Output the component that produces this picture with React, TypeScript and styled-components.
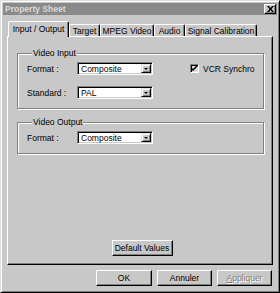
import styled, { createGlobalStyle } from 'styled-components'

const GlobalStyle = createGlobalStyle`
  html, body {
    margin: 0;
    padding: 0;
    background: #c8c8c8;
  }
  body {
    font-family: "Liberation Sans", Arial, sans-serif;
    font-size: 8.5px;
    color: #000;
  }
`

const Dialog = styled.div`
  box-sizing: border-box;
  width: 280px;
  height: 293px;
  background: #c8c8c8;
  border: 1px solid;
  border-color: #dfdfdf #000 #000 #dfdfdf;
  box-shadow: inset 1px 1px #fff, inset -1px -1px #808080;
  padding: 2px 2px 2px 2px;
  display: flex;
  flex-direction: column;
`

const TitleBar = styled.div`
  height: 12px;
  background: #8a8a8a;
  display: flex;
  align-items: center;
  justify-content: space-between;
  padding: 0 1px 0 2px;
`

const Title = styled.span`
  color: #dadada;
  font-weight: bold;
  font-size: 8.5px;
  line-height: 12px;
`

const CloseButton = styled.div`
  box-sizing: border-box;
  width: 12px;
  height: 10px;
  background: #c8c8c8;
  border: 1px solid;
  border-color: #fff #000 #000 #fff;
  box-shadow: inset -1px -1px #808080;
  display: flex;
  align-items: center;
  justify-content: center;
`

const Body = styled.div`
  flex: 1;
  display: flex;
  flex-direction: column;
  padding: 6px 4px 4px 4px;
`

const TabStrip = styled.div`
  display: flex;
  align-items: flex-end;
  height: 15px;
  padding-left: 1px;
  position: relative;
  z-index: 1;
`

const Tab = styled.div<{ $active?: boolean; $width: number }>`
  box-sizing: border-box;
  width: ${({ $width }) => $width}px;
  height: ${({ $active }) => ($active ? 16 : 12)}px;
  margin-bottom: ${({ $active }) => ($active ? -1 : 0)}px;
  background: #c8c8c8;
  border-top: 1px solid #fff;
  border-left: 1px solid #fff;
  border-right: 1px solid #000;
  border-radius: 2px 2px 0 0;
  box-shadow: inset -1px 0 #808080;
  display: flex;
  align-items: ${({ $active }) => ($active ? 'flex-start' : 'center')};
  justify-content: center;
  padding-top: ${({ $active }) => ($active ? 2 : 0)}px;
  line-height: 10px;
  white-space: nowrap;
`

const Panel = styled.div`
  flex: 1;
  box-sizing: border-box;
  border: 1px solid;
  border-color: #fff #000 #000 #fff;
  box-shadow: inset -1px -1px #808080;
  display: flex;
  flex-direction: column;
  padding: 11px 8px 8px 9px;
`

const Group = styled.fieldset<{ $height: number }>`
  box-sizing: border-box;
  margin: 0 0 0 0;
  height: ${({ $height }) => $height}px;
  border: 1px solid #808080;
  box-shadow: inset 1px 1px #fff, 1px 1px #fff;
  padding: 4px 0 0 9px;
  min-width: 0;
  & + & {
    margin-top: 8px;
  }
`

const Legend = styled.legend`
  background: #c8c8c8;
  padding: 0 1px;
  margin-left: 5px;
  line-height: 10px;
`

const Row = styled.div`
  display: flex;
  align-items: center;
  height: 13px;
  & + & {
    margin-top: 11px;
  }
`

const Label = styled.span`
  width: 50px;
  flex-shrink: 0;
  white-space: nowrap;
`

const Combo = styled.div`
  box-sizing: border-box;
  width: 76px;
  height: 13px;
  background: #fff;
  border: 1px solid;
  border-color: #808080 #fff #fff #808080;
  box-shadow: inset 1px 1px #000, inset -1px -1px #c8c8c8;
  display: flex;
  align-items: center;
  padding: 1px 1px 1px 3px;
`

const ComboText = styled.span`
  flex: 1;
  line-height: 10px;
`

const DropButton = styled.div`
  box-sizing: border-box;
  width: 10px;
  height: 9px;
  background: #c8c8c8;
  border: 1px solid;
  border-color: #dfdfdf #000 #000 #dfdfdf;
  box-shadow: inset 1px 1px #fff, inset -1px -1px #808080;
  display: flex;
  align-items: center;
  justify-content: center;
`

const Arrow = styled.div`
  width: 0;
  height: 0;
  border-left: 2px solid transparent;
  border-right: 2px solid transparent;
  border-top: 2px solid #000;
`

const CheckWrap = styled.div`
  display: flex;
  align-items: center;
  margin-left: 37px;
  gap: 4px;
`

const CheckBox = styled.div`
  box-sizing: border-box;
  width: 9px;
  height: 9px;
  background: #dcdcdc;
  border: 1px solid;
  border-color: #808080 #fff #fff #808080;
  box-shadow: inset 1px 1px #000;
  display: flex;
  align-items: center;
  justify-content: center;
`

const Spacer = styled.div`
  flex: 1;
`

const Button = styled.div<{ $width: number; $disabled?: boolean }>`
  box-sizing: border-box;
  width: ${({ $width }) => $width}px;
  height: 16px;
  background: #c8c8c8;
  border: 1px solid;
  border-color: #fff #000 #000 #fff;
  box-shadow: inset -1px -1px #808080;
  display: flex;
  align-items: center;
  justify-content: center;
  line-height: 10px;
  color: ${({ $disabled }) => ($disabled ? '#808080' : '#000')};
  text-shadow: ${({ $disabled }) => ($disabled ? '1px 1px #fff' : 'none')};
`

const DefaultButton = styled(Button)`
  align-self: center;
  margin-left: 3px;
`

const Footer = styled.div`
  display: flex;
  justify-content: flex-end;
  gap: 5px;
  padding: 5px 1px 0 0;
`

const tabs = [
  { label: 'Input / Output', width: 61, active: true },
  { label: 'Target', width: 31 },
  { label: 'MPEG Video', width: 54 },
  { label: 'Audio', width: 31 },
  { label: 'Signal Calibration', width: 72 },
]

function ComboBox({ value }: { value: string }) {
  return (
    <Combo>
      <ComboText>{value}</ComboText>
      <DropButton>
        <Arrow />
      </DropButton>
    </Combo>
  )
}

export default function App() {
  return (
    <>
      <GlobalStyle />
      <Dialog>
        <TitleBar>
          <Title>Property Sheet</Title>
          <CloseButton>
            <svg width="7" height="6" viewBox="0 0 7 6">
              <path d="M0 0h2l1.5 2 1.5-2h2L4.5 3 7 6H5L3.5 4 2 6H0l2.5-3z" fill="#000" />
            </svg>
          </CloseButton>
        </TitleBar>
        <Body>
          <TabStrip>
            {tabs.map((t) => (
              <Tab key={t.label} $active={t.active} $width={t.width}>
                {t.label}
              </Tab>
            ))}
          </TabStrip>
          <Panel>
            <Group $height={61}>
              <Legend>Video Input</Legend>
              <Row>
                <Label>Format :</Label>
                <ComboBox value="Composite" />
                <CheckWrap>
                  <CheckBox>
                    <svg width="7" height="7" viewBox="0 0 7 7">
                      <path d="M0 2l2 2 5-5v2L2 6 0 4z" fill="#000" />
                    </svg>
                  </CheckBox>
                  <span>VCR Synchro</span>
                </CheckWrap>
              </Row>
              <Row>
                <Label>Standard :</Label>
                <ComboBox value="PAL" />
              </Row>
            </Group>
            <Group $height={37}>
              <Legend>Video Output</Legend>
              <Row>
                <Label>Format :</Label>
                <ComboBox value="Composite" />
              </Row>
            </Group>
            <Spacer />
            <DefaultButton $width={61}>Default Values</DefaultButton>
          </Panel>
          <Footer>
            <Button $width={56}>OK</Button>
            <Button $width={55}>Annuler</Button>
            <Button $width={55} $disabled>
              <span>
                <u>A</u>ppliquer
              </span>
            </Button>
          </Footer>
        </Body>
      </Dialog>
    </>
  )
}
